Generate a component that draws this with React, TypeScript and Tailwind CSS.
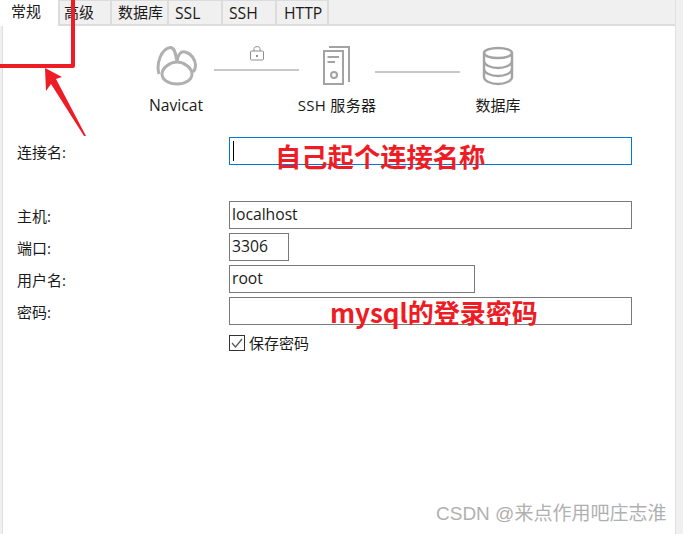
const font = { fontFamily: '"Open Sans", "Noto Sans CJK SC", sans-serif' };
const noteFont = { fontFamily: '"Noto Sans CJK SC", sans-serif' };

const tabs = [
    { label: "常规", width: "w-[60px]", className: "bg-white pl-[11px] pt-px" },
    { label: "高级", width: "w-[52px]", className: "pl-[4px] pt-[1px] border-t border-t-[#dcdcdc]" },
    { label: "数据库", width: "w-[57px]", className: "pl-[6px] pt-[1px] border-t border-t-[#dcdcdc]" },
    { label: "SSL", width: "w-[54px]", className: "pl-[6px] pt-[2px] border-t border-t-[#dcdcdc] text-[15.7px]" },
    { label: "SSH", width: "w-[54px]", className: "pl-[6px] pt-[2px] border-t border-t-[#dcdcdc] text-[15.7px]" },
    { label: "HTTP", width: "w-[52px]", className: "pl-[7px] pt-[2px] border-t border-t-[#dcdcdc] text-[15.7px]" },
];

const NavicatIcon = () => (
    <svg width="42" height="40" viewBox="0 0 42 40" fill="none" stroke="#b0b0b0" strokeWidth="3">
        <path d="M4 28 C1 18 6 3 15 1.500 C20 1 21 9 22 16 C23 8 26 5 30 6 C36 7 40.500 14 40.500 19 C40.500 22 40 24 38 26" />
        <path d="M22 16 C15 16 7 22 7 28 C7 34 14 38 22 38 C30 38 37 34 37 28 C37 22 29 16 22 16" />
    </svg>
);

const ServerIcon = () => (
    <svg width="28" height="40" viewBox="0 0 28 40" fill="none" stroke="#a3a3a3" strokeWidth="2">
        <rect x="1" y="5" width="19" height="33" />
        <path d="M6 1 H26 V36 M4.500 11 H16 M4.500 16 H12" />
        <circle cx="11" cy="29" r="3" />
    </svg>
);

const DatabaseIcon = () => (
    <svg width="32" height="40" viewBox="0 0 32 40" fill="none" stroke="#a3a3a3" strokeWidth="2.400">
        <ellipse cx="16" cy="7" rx="14" ry="5" />
        <path d="M2 7 V31 C2 35 9 38 16 38 C23 38 30 35 30 31 V7" />
        <path d="M2 15 C2 19 9 22 16 22 C23 22 30 19 30 15 M2 23 C2 27 9 30 16 30 C23 30 30 27 30 23" />
    </svg>
);

const LockIcon = () => (
    <svg width="16" height="16" viewBox="0 0 16 16" fill="none" stroke="#8f8f8f" strokeWidth="1">
        <rect x="1.500" y="6" width="13" height="9" rx="1" />
        <path d="M5 6 V3.500 C5 1 11 1 11 3.500 V6" />
        <path d="M8 10 V12" strokeWidth="2" />
    </svg>
);

const Field = ({ label, value, width, focused }: { label: string; value?: string; width: string; focused?: boolean }) => (
    <div className="flex items-center h-7 text-[15px] text-[#1a1a1a]">
        <label className="w-[212px] shrink-0 pt-[3px]">{label}</label>
        <div className={`${width} h-7 border flex items-center pl-[2px] pb-px text-[15.7px] ${focused ? "border-[#0078d7]" : "border-[#7a7a7a]"}`}>
            {focused && <span className="w-px h-[20px] bg-black ml-px" />}
            {value}
        </div>
    </div>
);

export default function App() {
    return (
        <div className="relative w-[683px] h-[534px] overflow-hidden bg-white flex" style={font}>
            <div className="w-[3px] bg-[#f0f0f0] border-r border-[#e0e0e0]" />
            <main className="flex-1 flex flex-col">
                <div className="flex h-[26px] -ml-[3px] bg-[#f0f0f0] border-b-2 border-[#dcdcdc] text-[15px] leading-[20px] text-[#1a1a1a]">
                    {tabs.map((tab) => (
                        <div
                            key={tab.label}
                            className={`${tab.width} h-[26px] border-r-2 border-[#dcdcdc] whitespace-nowrap ${tab.className}`}
                        >
                            {tab.label}
                        </div>
                    ))}
                </div>

                <div className="flex items-start pt-[20px] pl-[128px] h-[111px] text-[15px] leading-[20px] text-[#1a1a1a]">
                    <div className="flex flex-col items-center w-[90px]">
                        <NavicatIcon />
                        <span className="mt-[9px] text-[15.7px]">Navicat</span>
                    </div>
                    <div className="flex flex-col items-center w-[85px] -mt-[1px] ml-[-7px]">
                        <LockIcon />
                        <div className="w-[85px] h-0.5 bg-[#c8c8c8] mt-[8px]" />
                    </div>
                    <div className="flex flex-col items-center w-[76px]">
                        <ServerIcon />
                        <span className="mt-[9px] whitespace-nowrap tracking-[0.3px]">SSH 服务器</span>
                    </div>
                    <div className="w-[85px] h-0.5 bg-[#c8c8c8] mt-[25px]" />
                    <div className="flex flex-col items-center w-[76px]">
                        <DatabaseIcon />
                        <span className="mt-[9px] whitespace-nowrap">数据库</span>
                    </div>
                </div>

                <form className="pl-[14px] flex flex-col gap-1">
                    <div className="mb-8">
                        <Field label="连接名:" width="w-[403px]" focused />
                    </div>
                    <Field label="主机:" value="localhost" width="w-[403px]" />
                    <Field label="端口:" value="3306" width="w-[60px]" />
                    <Field label="用户名:" value="root" width="w-[246px]" />
                    <Field label="密码:" width="w-[403px]" />
                    <div className="flex items-center gap-[4px] ml-[212px] mt-[6px] h-4 text-[15px] text-[#1a1a1a]">
                        <span className="w-4 h-4 border border-[#333] flex items-center justify-center">
                            <svg width="12" height="12" viewBox="0 0 12 12" fill="none" stroke="#555" strokeWidth="1.200">
                                <path d="M1 6 L4.500 10 L11 2" />
                            </svg>
                        </span>
                        保存密码
                    </div>
                </form>
            </main>
            <div className="w-[8px] bg-[#f0f0f0] border-l border-[#e0e0e0]" />

            {/* annotations drawn over the dialog */}
            <div className="absolute -left-[4px] -top-[4px] w-[79px] h-[72px] border-4 border-[#ee1c25] rounded-br-[2px]" />
            <svg className="absolute left-0 top-0" width="100" height="140" fill="#ee1c25">
                <polygon points="45,68 62,77 56,79 86,136 84,136 51,84 46,91" />
            </svg>
            <span className="absolute left-[275px] top-[138px] text-[26.3px] font-bold text-[#ee1c25] leading-[36px]" style={noteFont}>自己起个连接名称</span>
            <span className="absolute left-[330px] top-[294px] text-[26px] font-bold text-[#ee1c25] leading-[36px]" style={noteFont}>mysql的登录密码</span>
            <span className="absolute left-[436px] top-[501px] text-[19px] text-[#b0b0b0] leading-[26px] whitespace-nowrap" style={{ fontFamily: '"Liberation Sans", "Noto Sans CJK SC", sans-serif' }}>CSDN @来点作用吧庄志淮</span>
        </div>
    );
}
